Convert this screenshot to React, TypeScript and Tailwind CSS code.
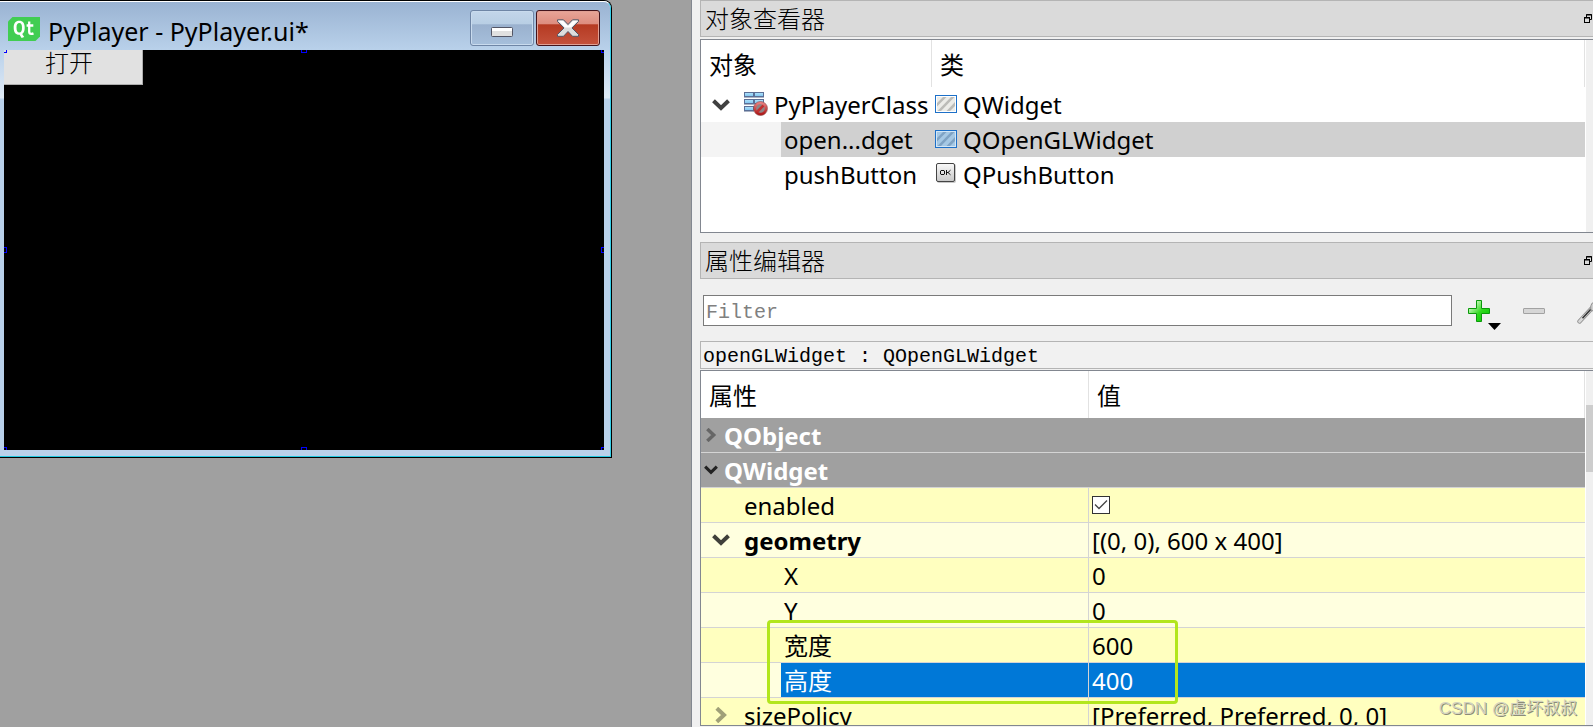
import type { ReactNode } from "react";

const UI = "font-['Noto_Sans','Noto_Sans_CJK_SC',sans-serif]";
const MONO = "font-['Liberation_Mono','Noto_Sans_CJK_SC',monospace]";

function ChevronDown({ className }: { className?: string }) {
  return (
    <svg viewBox="0 0 18 12" className={className} fill="none" stroke="currentColor" strokeWidth="4" aria-hidden="true">
      <path d="M1.5 1.8 L9 9 L16.5 1.8" />
    </svg>
  );
}

function ChevronRight({ className }: { className?: string }) {
  return (
    <svg viewBox="0 0 12 16" className={className} fill="none" stroke="currentColor" strokeWidth="4" aria-hidden="true">
      <path d="M1.8 1.2 L9 8 L1.8 14.8" />
    </svg>
  );
}

function BrokenLayoutIcon() {
  const cells = [
    [0, 0], [10, 0],
    [0, 7], [10, 7],
    [0, 14],
  ];
  return (
    <svg viewBox="0 0 24 24" className="size-6 shrink-0" aria-hidden="true">
      <defs>
        <linearGradient id="cell" x1="0" y1="0" x2="0" y2="1">
          <stop offset="0" stopColor="#b5e3fb" />
          <stop offset="1" stopColor="#7cc4f0" />
        </linearGradient>
        <linearGradient id="stop" x1="0" y1="0" x2="0" y2="1">
          <stop offset="0" stopColor="#e88080" />
          <stop offset="1" stopColor="#b01818" />
        </linearGradient>
      </defs>
      {cells.map(([x, y]) => (
        <g key={`${x}-${y}`}>
          <rect x={x + 0.5} y={y + 0.5} width="9" height="4" fill="url(#cell)" stroke="#5b6f96" />
          <path d={`M${x} ${y + 5.5} h10`} stroke="#a9b2c4" />
        </g>
      ))}
      <circle cx="16.5" cy="16.5" r="5.6" fill="#8e8688" />
      <path d="M12.5 20.5 L20.5 12.5" stroke="#c23030" strokeWidth="2.6" />
      <circle cx="16.5" cy="16.5" r="5.6" fill="none" stroke="url(#stop)" strokeWidth="2.6" />
      <circle cx="16.5" cy="16.5" r="7" fill="none" stroke="#8a4a4a" strokeWidth="0.6" />
    </svg>
  );
}

function WidgetIcon({ blue = false }: { blue?: boolean }) {
  return (
    <svg viewBox="0 0 22 18" className="h-[18px] w-[22px] shrink-0" aria-hidden="true">
      <rect x="0.5" y="0.5" width="21" height="17" fill={blue ? "#d3e6f5" : "#fff"} stroke="#1d70c8" />
      <rect x="2" y="2" width="18" height="14" fill={blue ? "#a5c8e4" : "#ecece8"} />
      <path
        d="M2 8 L8 2 H11.5 L2 11.5 Z M2.500 16 L16 2 H19.500 L6 16 Z M11.500 16 L20 7 V11 L15 16 Z"
        fill={blue ? "#7fa3c4" : "#bcbcb8"}
      />
    </svg>
  );
}

function PushButtonIcon() {
  return (
    <svg viewBox="0 0 22 22" className="size-[22px] shrink-0" aria-hidden="true">
      <defs>
        <linearGradient id="key" x1="0" y1="0" x2="0" y2="1">
          <stop offset="0" stopColor="#fafafa" />
          <stop offset="1" stopColor="#c8c8c8" />
        </linearGradient>
      </defs>
      <rect x="2" y="1" width="19" height="19" rx="2" fill="#c8c8c8" />
      <rect x="1.5" y="0.5" width="18" height="18" rx="1.5" fill="url(#key)" stroke="#444" />
      <path d="M6 7.5 H9 L9.5 8 V11 L9 11.5 H6 L5.5 11 V8 Z M11.5 7 V12 M11.8 9.5 H13 L15.500 7.200 M13 9.500 L15.500 11.800" fill="none" stroke="#111" />
    </svg>
  );
}

function FloatIcon() {
  return (
    <svg viewBox="0 0 8 9" className="h-[9px] w-2" fill="none" stroke="#000" aria-hidden="true">
      <path d="M2.5 3 V0.5 H7.5 V5.5 H6 M2 1 H8" />
      <rect x="0.5" y="3.5" width="5" height="5" />
      <path d="M0 4 H6" />
    </svg>
  );
}

function PlusIcon() {
  return (
    <svg viewBox="0 0 34 31" className="h-[31px] w-[34px]" aria-hidden="true">
      <defs>
        <linearGradient id="plus" x1="0" y1="0" x2="1" y2="1">
          <stop offset="0.2" stopColor="#c6f7bb" />
          <stop offset="0.55" stopColor="#2fd91c" />
          <stop offset="1" stopColor="#00c400" />
        </linearGradient>
      </defs>
      <path d="M8.5 0.5 H13.5 V8.5 H21.5 V13.5 H13.5 V21.5 H8.5 V13.5 H0.5 V8.5 H8.5 Z" fill="url(#plus)" stroke="#0a9a0a" />
      <path d="M20 23 H33 L26.5 30 Z" fill="#000" />
    </svg>
  );
}

function MinusIcon() {
  return (
    <svg viewBox="0 0 22 6" className="h-1.5 w-[22px]" aria-hidden="true">
      <rect x="0.5" y="0.5" width="21" height="5" rx="0.5" fill="#d6d6d6" stroke="#a2a2a2" />
    </svg>
  );
}

function WrenchIcon() {
  return (
    <svg viewBox="0 0 24 24" className="size-6" aria-hidden="true">
      <path d="M2.5 21.5 L15 8" stroke="#8f8f8f" strokeWidth="4.4" strokeLinecap="round" />
      <path d="M2.5 21.5 L15 8" stroke="#d8d8d8" strokeWidth="2.6" strokeLinecap="round" />
      <path d="M5.5 18.2 L14 9" stroke="#333" strokeWidth="1.6" />
      <path d="M14 10 C13 5 15 2 19 1 L18 5 L20 7 L23 5 C23 9 20 12 16 11 Z" fill="#d0d0d0" stroke="#8f8f8f" />
    </svg>
  );
}

const handles = [
  "-left-[3px] -top-[3px]",
  "left-[297px] -top-[3px]",
  "-right-[3px] -top-[3px]",
  "-left-[3px] top-[197px]",
  "-right-[3px] top-[197px]",
  "-left-[3px] -bottom-[3px]",
  "left-[297px] -bottom-[3px]",
  "-right-[3px] -bottom-[3px]",
];

function FormWindow() {
  return (
    <section className="w-[612px] rounded-tr-lg border-t border-r border-b border-black bg-[#b9d1ea]">
      <div className="rounded-tr-[7px] border-t border-r border-b border-t-white border-r-[#35cfe8] border-b-[#1fc8e0] bg-[#b9d1ea]">
        <header className="flex h-12 items-center rounded-tr-md bg-linear-to-b from-[#9ab3d2] to-[#b9d1ea] pr-2.5 pt-1 pl-2">
          <svg viewBox="0 0 32 24" className="mt-0.5 h-6 w-8 shrink-0" aria-hidden="true">
            <path d="M4.5 0 H32 V19.5 L27.5 24 H0 V4.5 Z" fill="#41cd52" />
            <path
              d="M11.3 3.8 c3.6 0 5.4 2.4 5.4 6.9 0 3.1-.9 5.2-2.5 6.2 l2 3 -2.6 1.2 -2-3.4 c-4 .2-5.9-2.4-5.9-7 0-4.5 1.900-6.900 5.600-6.900 Z M11.300 6.100 c-1.900 0-2.800 1.500-2.800 4.600 0 3.100.9 4.700 2.800 4.700 1.900 0 2.700-1.600 2.700-4.700 0-3.100-.8-4.600-2.700-4.600 Z"
              fill="#fff"
              fillRule="evenodd"
            />
            <path d="M21.200 4.500 V14.500 q0 2.400 2 2.400 q1.200 0 2.300-.5 M18.600 8.500 H25.300" fill="none" stroke="#fff" strokeWidth="2.300" />
          </svg>
          <h1 className={`${UI} ml-2 flex-1 pt-1.5 text-[25px] leading-8 whitespace-nowrap text-black`}>PyPlayer - PyPlayer.ui*</h1>
          <button
            type="button"
            aria-label="Minimize"
            className="mr-0.5 flex h-9 w-16 items-center justify-center rounded-[3px] border border-[#6f86a6] bg-[linear-gradient(#c3d6ea,#b8cee4_39%,#9ab1ce_40%,#a6bfdb)] pt-2 shadow-[inset_0_0_0_1px_#c9dbee]"
          >
            <svg viewBox="0 0 22 10" className="h-2.5 w-[22px]" aria-hidden="true">
              <rect x="0.500" y="0.500" width="21" height="9" rx="1" fill="#e0e0e0" stroke="#535666" />
              <path d="M1 2.500 H21" stroke="#fff" strokeWidth="3" />
            </svg>
          </button>
          <button
            type="button"
            aria-label="Close"
            className="flex h-9 w-16 items-center justify-center rounded-[3px] border border-[#43141c] bg-[linear-gradient(#e8a598,#dd8c7e_39%,#b53a22_40%,#c4523c)] shadow-[inset_0_0_0_1px_#e0a094]"
          >
            <svg viewBox="0 0 22 18" className="h-[18px] w-[22px]" aria-hidden="true">
              <path d="M0.500 0.800 H6.500 L11 5.500 L15.500 0.800 H21.500 V2.500 L15 9 L21.500 15.500 V17.300 H15.500 L11 12.500 L6.500 17.300 H0.500 V15.500 L7 9 L0.500 2.500 Z" fill="#dcdcdc" stroke="#535666" />
              <path d="M1.500 1.800 H6 L11 7 L16 1.800 H20.500 L14 8.500 H8 Z" fill="#fff" />
            </svg>
          </button>
        </header>
        <div className="bg-[linear-gradient(#b9d1ea,#dfeaf6_48px,#b9d1ea_49px)] pr-1.5 pb-1.5 pl-1">
          <div className="relative h-[400px] overflow-hidden bg-black">
            <button
              type="button"
              className={`${MONO} flex h-[35px] w-[139px] items-center justify-center border-r border-b border-[#adadad] bg-[#e1e1e1] pr-2 pb-0.5 text-2xl leading-6 font-light text-black`}
            >
              打开
            </button>
            {handles.map((place) => (
              <span key={place} className={`${place} absolute size-1.5 border border-[#0000ff]`} />
            ))}
          </div>
        </div>
      </div>
    </section>
  );
}

function DockTitle({ children }: { children: ReactNode }) {
  return (
    <div className="flex h-[37px] shrink-0 items-center justify-between border border-r-0 border-[#b4b4b4] bg-[#dadada] pr-px pl-1">
      <h2 className={`${MONO} pt-1.5 text-2xl font-light text-black`}>{children}</h2>
      <button type="button" aria-label="Float">
        <FloatIcon />
      </button>
    </div>
  );
}

const th = "h-[47px] border-r border-[#e2e2e2] p-0 pt-0.5 pl-2 text-left text-2xl font-normal";

const objects = [
  { name: "PyPlayerClass", type: "QWidget", icon: <WidgetIcon />, root: true, selected: false },
  { name: "open...dget", type: "QOpenGLWidget", icon: <WidgetIcon blue />, root: false, selected: true },
  { name: "pushButton", type: "QPushButton", icon: <PushButtonIcon />, root: false, selected: false },
];

function ObjectInspector() {
  return (
    <div className="mt-0.5 flex h-[194px] shrink-0 border border-r-0 border-[#828790] bg-white">
      <div className="min-w-0 flex-1 border-r border-white">
        <table className={`${UI} w-full table-fixed border-separate border-spacing-0 text-2xl whitespace-nowrap text-black`}>
          <colgroup>
            <col className="w-[231px]" />
            <col />
          </colgroup>
          <thead>
            <tr>
              <th className={th}>对象</th>
              <th className={th}>类</th>
            </tr>
          </thead>
          <tbody>
            {objects.map((o) => (
              <tr key={o.name} className={o.selected ? "bg-[#d0d0d0]" : ""}>
                <td className="h-[35px] p-0">
                  {o.root ? (
                    <div className="flex h-[35px] items-center pl-[11px]">
                      <ChevronDown className="h-3 w-[18px] shrink-0 text-[#404040]" />
                      <span className="mr-1.5 ml-3.5 flex pb-0.5">
                        <BrokenLayoutIcon />
                      </span>
                      {o.name}
                    </div>
                  ) : (
                    <div className={`flex h-[35px] items-center border-l-80 pl-[3px] ${o.selected ? "border-[#f4f4f4]" : "border-white"}`}>
                      {o.name}
                    </div>
                  )}
                </td>
                <td className="h-[35px] p-0">
                  <div className="flex h-[35px] items-center pl-[3px]">
                    <span className="mr-1.5 flex h-6 w-[22px] items-center pb-0.5">{o.icon}</span>
                    {o.type}
                  </div>
                </td>
              </tr>
            ))}
          </tbody>
        </table>
      </div>
      <div className="w-[7px] shrink-0 bg-[#f0f0f0]" />
    </div>
  );
}

type Prop = {
  name: string;
  value?: ReactNode;
  level: 1 | 2;
  tone: string;
  bold?: boolean;
  arrow?: "down" | "right";
  selected?: boolean;
};

const props: Prop[] = [
  {
    name: "enabled",
    level: 1,
    tone: "bg-[#ffffbf]",
    value: (
      <span className="grid size-[18px]">
        <input id="enabled" type="checkbox" defaultChecked className="peer col-start-1 row-start-1 size-[18px] appearance-none border border-[#333] bg-white" />
        <svg viewBox="0 0 18 18" className="pointer-events-none col-start-1 row-start-1 hidden size-[18px] peer-checked:block" fill="none" stroke="#444" strokeWidth="1.300" aria-hidden="true">
          <path d="M3 8.500 L7 12.500 L15 4.500" />
        </svg>
      </span>
    ),
  },
  { name: "geometry", level: 1, tone: "bg-[#ffffdf]", bold: true, arrow: "down", value: "[(0, 0), 600 x 400]" },
  { name: "X", level: 2, tone: "bg-[#ffffbf]", value: "0" },
  { name: "Y", level: 2, tone: "bg-[#ffffdf]", value: "0" },
  { name: "宽度", level: 2, tone: "bg-[#ffffbf]", value: "600" },
  { name: "高度", level: 2, tone: "bg-[#ffffdf]", value: "400", selected: true },
  { name: "sizePolicy", level: 1, tone: "bg-[#ffffbf]", arrow: "right", value: "[Preferred, Preferred, 0, 0]" },
];

function PropertyTable() {
  return (
    <div className="relative mt-px mb-px flex min-h-0 flex-1 overflow-hidden border border-r-0 border-[#828790] bg-white">
      <div className="min-w-0 flex-1 border-r border-white">
        <table className={`${UI} w-full table-fixed border-separate border-spacing-0 text-2xl whitespace-nowrap text-black`}>
          <colgroup>
            <col className="w-[388px]" />
            <col />
          </colgroup>
          <thead>
            <tr>
              <th className={th}>属性</th>
              <th className={th}>值</th>
            </tr>
          </thead>
          <tbody>
            {["QObject", "QWidget"].map((group, i) => (
              <tr key={group} className="bg-[#a0a0a0] text-white">
                <th colSpan={2} className="border-b border-[#d4d4d4] p-0 text-left font-bold">
                  <div className="flex h-[34px] items-center pl-[3px]">
                    <span className="mr-1.5 flex w-3.5 items-center">
                      {i === 0 ? (
                        <ChevronRight className="ml-px h-3.5 w-3 text-[#666]" />
                      ) : (
                        <ChevronDown className="h-3 w-3.5 text-[#222]" />
                      )}
                    </span>
                    <span className="pt-0.5">{group}</span>
                  </div>
                </th>
              </tr>
            ))}
            {props.map((p) => (
              <tr key={p.name} className={p.tone}>
                <td className="border-r border-b border-[#d4d4d4] p-0">
                  {p.level === 1 ? (
                    <div className={`flex h-[34px] items-center pl-[11px] ${p.bold ? "font-bold" : ""}`}>
                      <span className="mr-3.5 flex w-[18px] justify-center">
                        {p.arrow === "down" && <ChevronDown className="h-3 w-[18px] text-[#40403a]" />}
                        {p.arrow === "right" && <ChevronRight className="h-4 w-3 text-[#a0a078]" />}
                      </span>
                      {p.name === "enabled" ? (
                        <label htmlFor="enabled" className="pt-0.5">{p.name}</label>
                      ) : (
                        <span className="pt-0.5">{p.name}</span>
                      )}
                    </div>
                  ) : (
                    <div className={`ml-20 flex h-[34px] items-center pt-0.5 pl-[3px] ${p.selected ? "bg-[#0078d7] text-white" : ""}`}>{p.name}</div>
                  )}
                </td>
                <td className={`border-b border-[#d4d4d4] p-0 ${p.selected ? "bg-[#0078d7] text-white" : ""}`}>
                  <div className={`flex h-[34px] items-center pl-[3px] ${typeof p.value === "string" ? "pt-0.5" : ""}`}>{p.value}</div>
                </td>
              </tr>
            ))}
          </tbody>
        </table>
      </div>
      <div className="w-[7px] shrink-0 bg-[#f0f0f0] pt-[34px]">
        <div className="h-[67px] bg-[#cdcdcd]" />
      </div>
      <div className="pointer-events-none absolute top-[249px] left-[66px] h-[84px] w-[411px] rounded-sm border-3 border-[#b2e61d]" />
    </div>
  );
}

export default function App() {
  return (
    <div className="relative flex h-screen overflow-hidden bg-[#a0a0a0]">
      <main className="w-[691px] shrink-0">
        <FormWindow />
      </main>
      <aside className="flex min-w-0 flex-1 flex-col overflow-hidden border-l border-[#828790] bg-[#f0f0f0] pl-2">
        <DockTitle>对象查看器</DockTitle>
        <ObjectInspector />
        <div className="mt-[9px] flex min-h-0 flex-1 flex-col">
          <DockTitle>属性编辑器</DockTitle>
          <div className="mt-4 flex h-[31px] shrink-0 pl-[3px]">
            <input
              type="text"
              aria-label="Filter"
              placeholder="Filter"
              className={`${MONO} h-[31px] min-w-0 flex-1 border border-[#7a7a7a] bg-white px-0.5 pt-1 text-xl text-black outline-none placeholder:text-[#808080]`}
            />
            <div className="flex shrink-0 pt-[5px] pl-4">
              <button type="button" aria-label="Add dynamic property" className="h-[31px]">
                <PlusIcon />
              </button>
              <button type="button" aria-label="Remove dynamic property" className="ml-[21px] flex h-[22px] items-center">
                <MinusIcon />
              </button>
              <button type="button" aria-label="Configure property editor" className="ml-8 h-6 w-4 overflow-hidden">
                <span className="flex w-6">
                  <WrenchIcon />
                </span>
              </button>
            </div>
          </div>
          <div className={`${MONO} mt-[15px] flex h-7 shrink-0 items-center border border-r-0 border-[#b4b4b4] bg-[#f1f1f1] pt-1 pl-0.5 text-xl leading-6 text-black`}>
            <span className="whitespace-pre">openGLWidget : QOpenGLWidget</span>
          </div>
          <PropertyTable />
        </div>
      </aside>
      <p className="pointer-events-none absolute right-4 bottom-2 font-['Liberation_Sans','Noto_Sans_CJK_SC',sans-serif] text-[17px] leading-5 text-[#d2d2c0] [text-shadow:1px_1px_0_#8c8c78]">
        CSDN @虚坏叔叔
      </p>
    </div>
  );
}
